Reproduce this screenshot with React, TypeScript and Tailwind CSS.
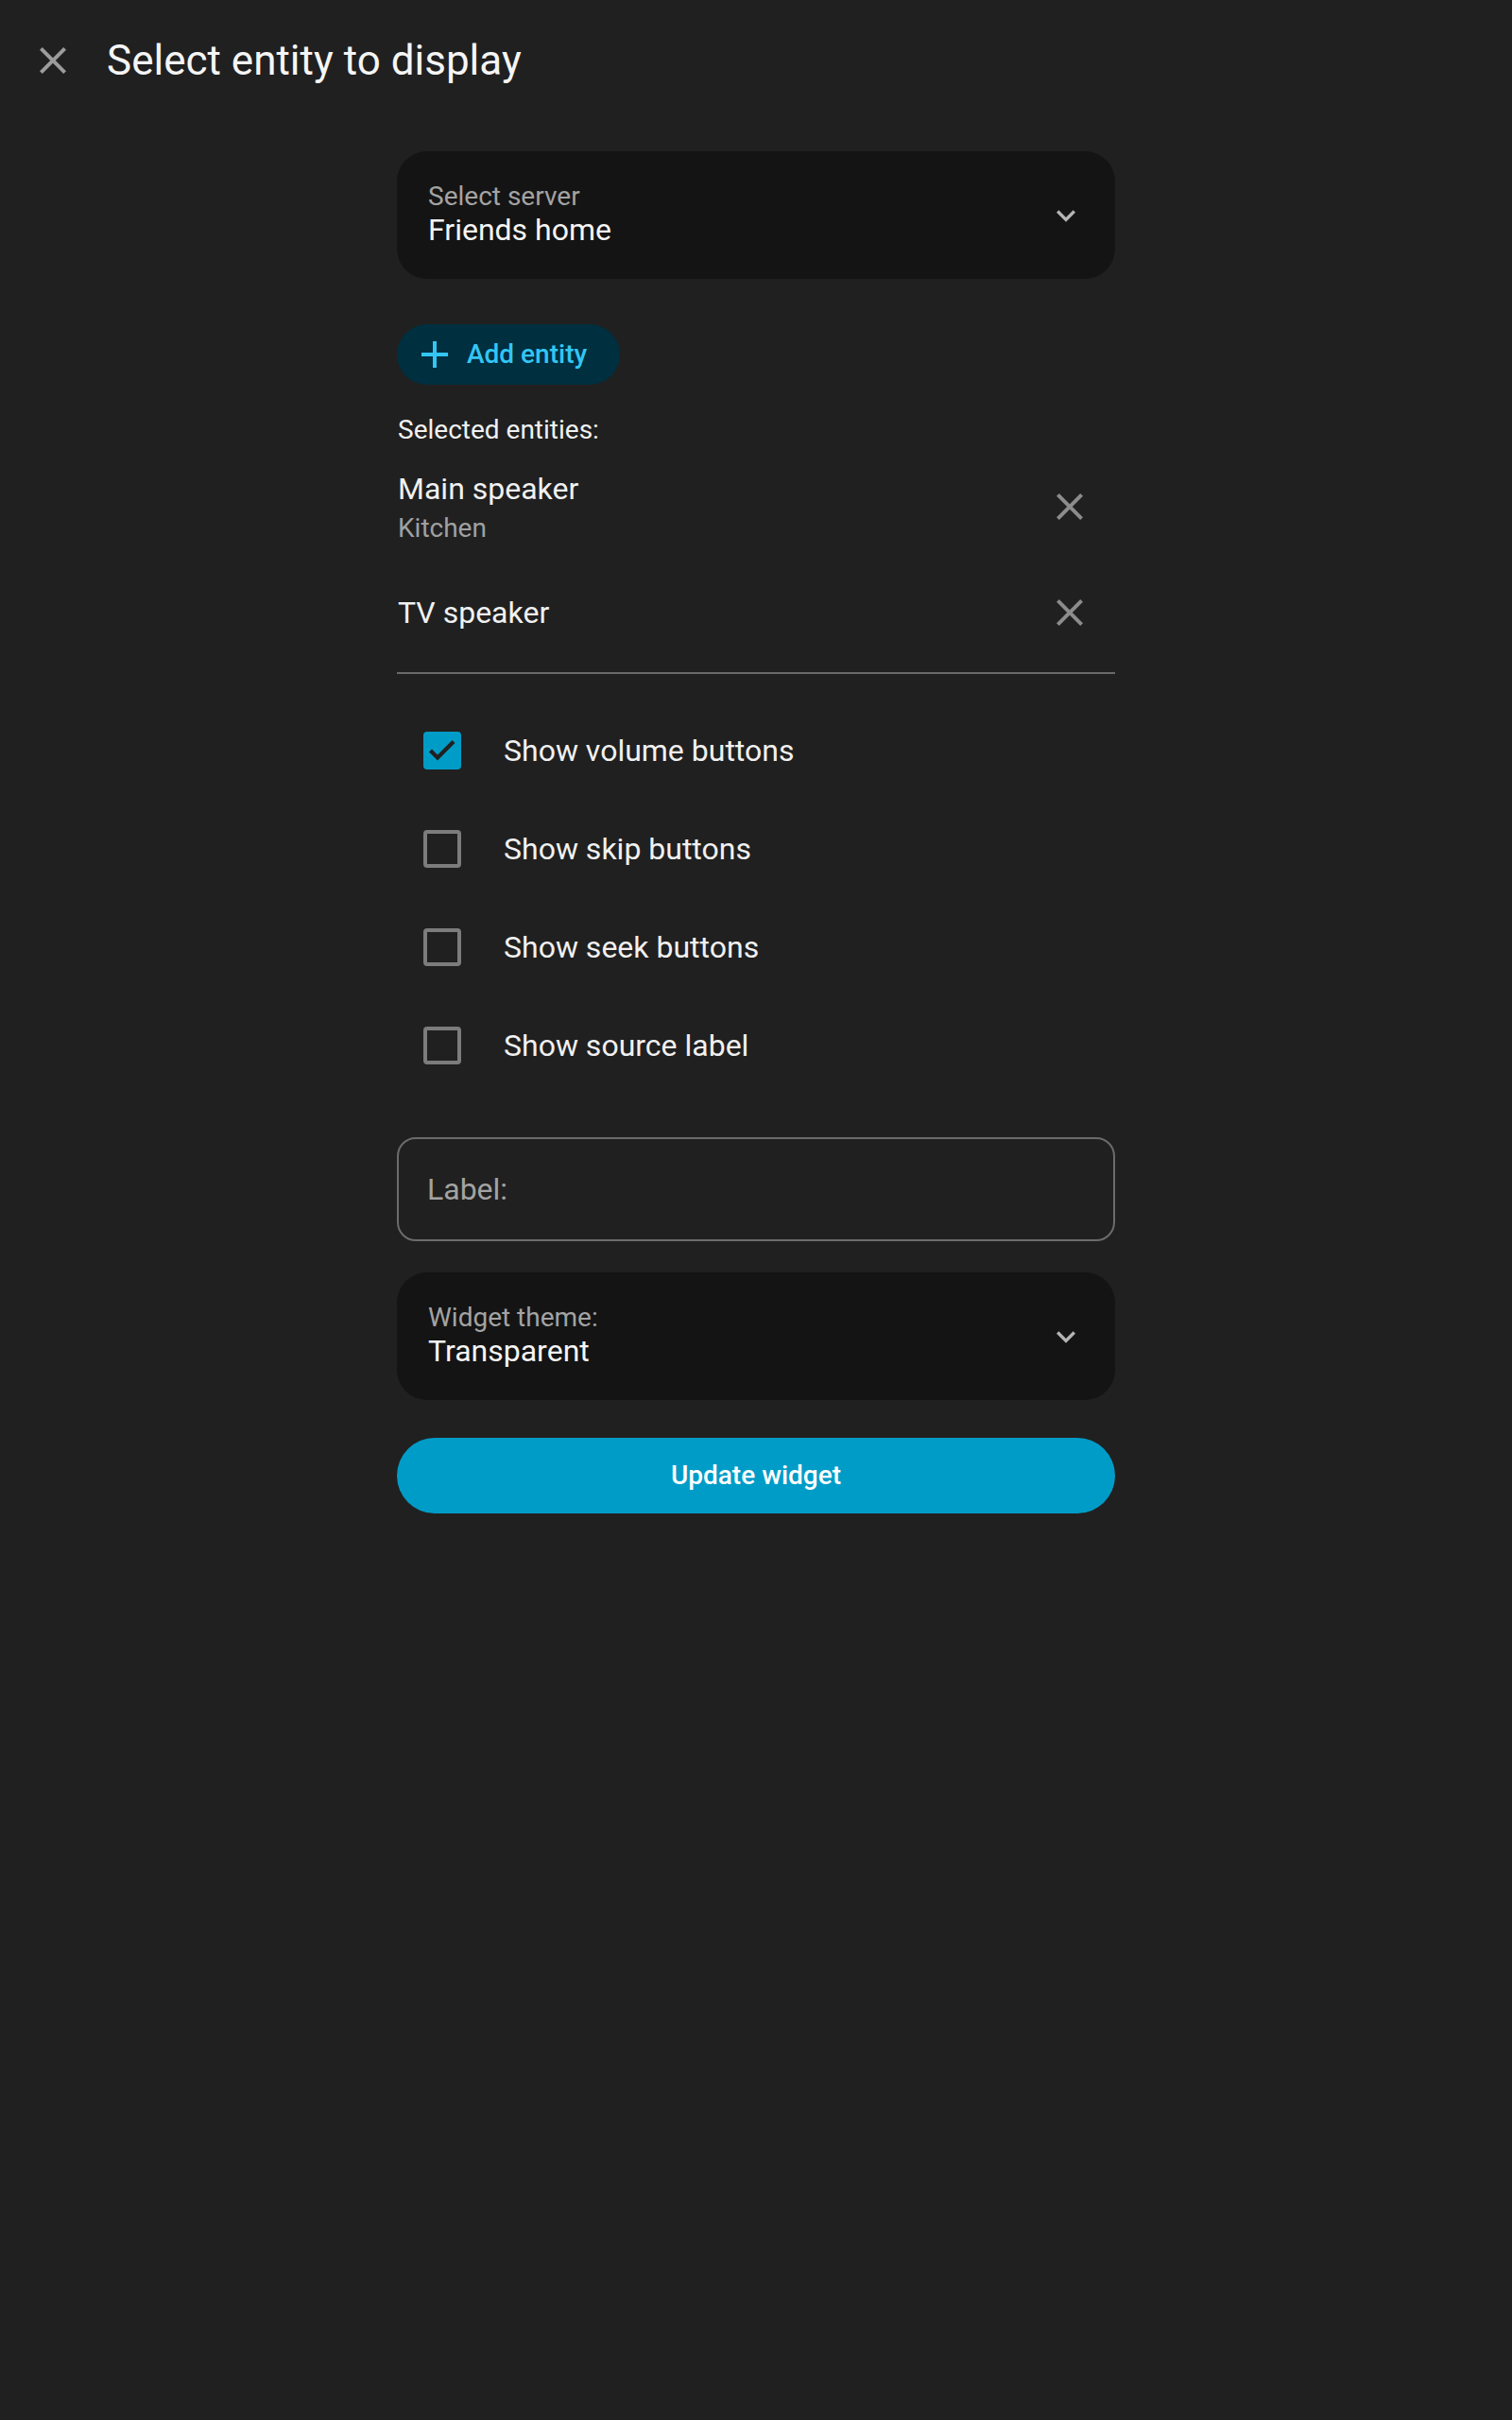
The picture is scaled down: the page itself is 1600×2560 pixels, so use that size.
import React, { useState } from 'react';

const CloseIcon: React.FC<{ className?: string }> = ({ className }) => (
  <svg viewBox="0 0 24 24" className={className} fill="currentColor">
    <path d="M19 6.41 17.59 5 12 10.59 6.41 5 5 6.41 10.59 12 5 17.59 6.41 19 12 13.41 17.59 19 19 17.59 13.41 12z" />
  </svg>
);

const ChevronIcon: React.FC = () => (
  <svg viewBox="0 0 24 24" className="h-[40px] w-[40px] text-[#b4b4b4]" fill="currentColor">
    <path d="M7.41 8.59 12 13.17l4.59-4.58L18 10l-6 6-6-6z" />
  </svg>
);

const SelectBox: React.FC<{ label: string; value: string }> = ({ label, value }) => (
  <div className="flex h-[135px] items-center justify-between rounded-[32px] bg-[#141414] pl-[33px] pr-[32px]">
    <div className="-mt-[3px] flex flex-col">
      <span className="text-[28px] leading-[34px] text-[#a3a3a3]">{label}</span>
      <span className="text-[32px] leading-[36px] text-[#f5f5f5]">{value}</span>
    </div>
    <ChevronIcon />
  </div>
);

const Checkbox: React.FC<{ checked: boolean; label: string; onToggle: () => void }> = ({ checked, label, onToggle }) => (
  <button onClick={onToggle} className="flex h-[104px] w-full items-center pl-[28px] text-left">
    {checked ? (
      <span className="flex h-[40px] w-[40px] items-center justify-center rounded-[4px] bg-[#009cc8]">
        <svg viewBox="0 0 40 40" className="h-[40px] w-[40px]">
          <polyline points="7.5,20 15,27.5 32,10.5" fill="none" stroke="#202020" strokeWidth="4.2" />
        </svg>
      </span>
    ) : (
      <span className="h-[40px] w-[40px] rounded-[4px] border-[4px] border-[#7c7c7c]" />
    )}
    <span className="ml-[45px] text-[32px] leading-[40px] text-[#f1f1f1]">{label}</span>
  </button>
);

const App: React.FC = () => {
  const [opts, setOpts] = useState([true, false, false, false]);
  const labels = ['Show volume buttons', 'Show skip buttons', 'Show seek buttons', 'Show source label'];

  return (
    <div className="min-h-screen bg-[#202020] font-[Roboto,sans-serif] text-[#f1f1f1]">
      <header className="flex h-[128px] items-center gap-[33px] px-[32px]">
        <CloseIcon className="h-[48px] w-[48px] text-[#9c9c9c]" />
        <h1 className="text-[44px] leading-[56px] text-[#f5f5f5]">Select entity to display</h1>
      </header>

      <main className="mx-auto flex w-[760px] flex-col pt-[32px]">
        <SelectBox label="Select server" value="Friends home" />

        <button className="mt-[48px] flex h-[64px] w-[236px] items-center gap-[20px] rounded-full bg-[#002f3f] pl-[26px]">
          <svg viewBox="0 0 28 28" className="h-[28px] w-[28px]">
            <path d="M14 0v28M0 14h28" stroke="#33c6f4" strokeWidth="4" />
          </svg>
          <span className="text-[28px] font-medium leading-[36px] text-[#33c6f4]">Add entity</span>
        </button>

        <p className="mt-[30px] pl-[1px] text-[28px] leading-[36px] text-[#f1f1f1]">Selected entities:</p>

        <div className="border-b-2 border-[#6a6a6a] py-[7px]">
          <div className="flex h-[112px] items-center justify-between">
            <div className="flex flex-col pl-[1px]">
              <span className="text-[32px] leading-[44px]">Main speaker</span>
              <span className="mt-[2px] text-[28px] leading-[36px] text-[#a0a0a0]">Kitchen</span>
            </div>
            <CloseIcon className="mr-[24px] h-[48px] w-[48px] text-[#8c8c8c]" />
          </div>
          <div className="flex h-[112px] items-center justify-between">
            <span className="pl-[1px] text-[32px] leading-[44px]">TV speaker</span>
            <CloseIcon className="mr-[24px] h-[48px] w-[48px] text-[#8c8c8c]" />
          </div>
        </div>

        <div className="mt-[29px] flex flex-col">
          {labels.map((l, i) => (
            <Checkbox
              key={l}
              label={l}
              checked={opts[i]}
              onToggle={() => setOpts(opts.map((v, j) => (j === i ? !v : v)))}
            />
          ))}
        </div>

        <div className="mt-[45px] flex h-[110px] items-center rounded-[20px] border-2 border-[#6b6b6b] pl-[30px]">
          <span className="text-[32px] leading-[40px] text-[#a3a3a3]">Label:</span>
        </div>

        <div className="mt-[33px]">
          <SelectBox label="Widget theme:" value="Transparent" />
        </div>

        <button className="mt-[40px] flex h-[80px] w-full items-center justify-center rounded-full bg-[#009cc8]">
          <span className="text-[28px] font-medium leading-[36px] text-white">Update widget</span>
        </button>
      </main>
    </div>
  );
};

export default App;
